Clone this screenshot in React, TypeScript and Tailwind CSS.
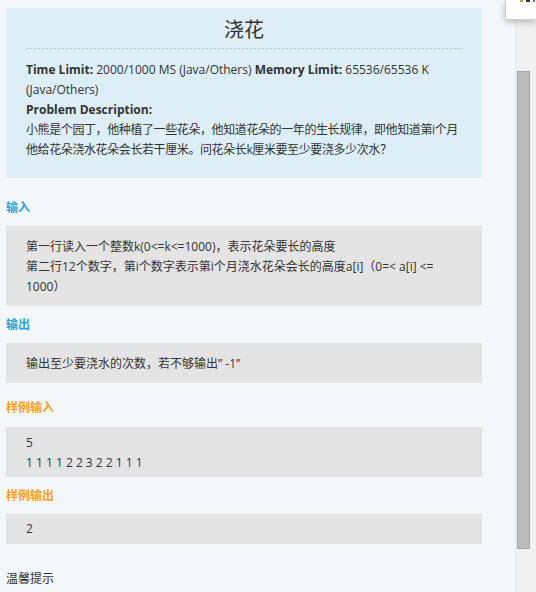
import React from 'react';

const FONT = "font-['Open_Sans','Noto_Sans_CJK_SC',sans-serif]";

const Label = ({ children, color, className = '' }: { children: React.ReactNode; color: string; className?: string }) => (
  <div className={`text-[12px] leading-[20px] font-bold ${color} ${className}`}>{children}</div>
);

const GrayBox = ({ children, className = '' }: { children: React.ReactNode; className?: string }) => (
  <div className={`w-[476px] bg-[#e4e4e4] px-[20px] text-[12px] leading-[20px] text-[#333] ${className}`}>{children}</div>
);

export default function App() {
  return (
    <div className={`relative flex h-[592px] w-[536px] overflow-hidden bg-[#f4f7fa] ${FONT}`}>
      {/* main column */}
      <div className="w-[515px] pl-[6px] pt-[8px]">
        {/* problem header */}
        <div className="w-[476px] bg-[#ddeef7] px-[20px] pt-[8px] pb-[18px] text-[#333]">
          <h1 className="text-center text-[20px] leading-[28px] font-normal">浇花</h1>
          <div className="mt-[4px] border-b border-dotted border-[#bbb]" />
          <div className="mt-[11px] text-[12px] leading-[20px]">
            <span className="font-bold">Time Limit:</span> 2000/1000 MS (Java/Others){' '}
            <span className="font-bold">Memory Limit:</span> 65536/65536 K (Java/Others)
          </div>
          <div className="text-[12px] leading-[20px] font-bold">Problem Description:</div>
          <p className="mr-[-4px] text-[12px] leading-[20px] tracking-[-0.4px]">
            小熊是个园丁，他种植了一些花朵，他知道花朵的一年的生长规律，即他知道第i个月他给花朵浇水花朵会长若干厘米。问花朵长k厘米要至少要浇多少次水？
          </p>
        </div>

        <Label color="text-[#2d9fd9]" className="mt-[20px] mb-[8px]">输入</Label>
        <GrayBox className="pt-[11px] pb-[9px]">
          第一行读入一个整数k(0&lt;=k&lt;=1000)，表示花朵要长的高度
          <br />
          第二行12个数字，第i个数字表示第i个月浇水花朵会长的高度a[i]（0=&lt; a[i] &lt;= 1000）
        </GrayBox>

        <Label color="text-[#2d9fd9]" className="mt-[9px] mb-[8px]">输出</Label>
        <GrayBox className="pt-[11px] pb-[9px]">输出至少要浇水的次数，若不够输出” -1”</GrayBox>

        <Label color="text-[#ff9c1b]" className="mt-[15px] mb-[9px]">样例输入</Label>
        <GrayBox className="pt-[6px] pb-[4px]">
          5
          <br />1 1 1 1 2 2 3 2 2 1 1 1
        </GrayBox>

        <Label color="text-[#ff9c1b]" className="mt-[9px] mb-[8px]">样例输出</Label>
        <GrayBox className="py-[5px]">2</GrayBox>

        <div className="mt-[25px] text-[12px] leading-[20px] text-[#333]">温馨提示</div>
      </div>

      {/* scrollbar */}
      <div className="flex w-[21px] border-l border-[#e8e8e8] bg-[#f0f0f0] pl-[1px] pt-[71px]">
        <div className="h-[478px] w-[13px] border border-[#a6a6a6] bg-[#bcbcbc]" />
      </div>

      {/* popup corner */}
      <div className="absolute right-0 top-0 h-[20px] w-[31px] rounded-bl-[2px] border-b border-l border-[#d0d0d0] bg-white shadow-[0_2px_6px_rgba(0,0,0,0.25)]">
        <div className="ml-[14px] flex gap-[3px]">
          <div className="h-[2px] w-[3px] bg-[#c59a3a]" />
          <div className="h-[2px] w-[4px] bg-[#333]" />
          <div className="h-[2px] w-[2px] bg-[#4a6ad0]" />
        </div>
      </div>
    </div>
  );
}
